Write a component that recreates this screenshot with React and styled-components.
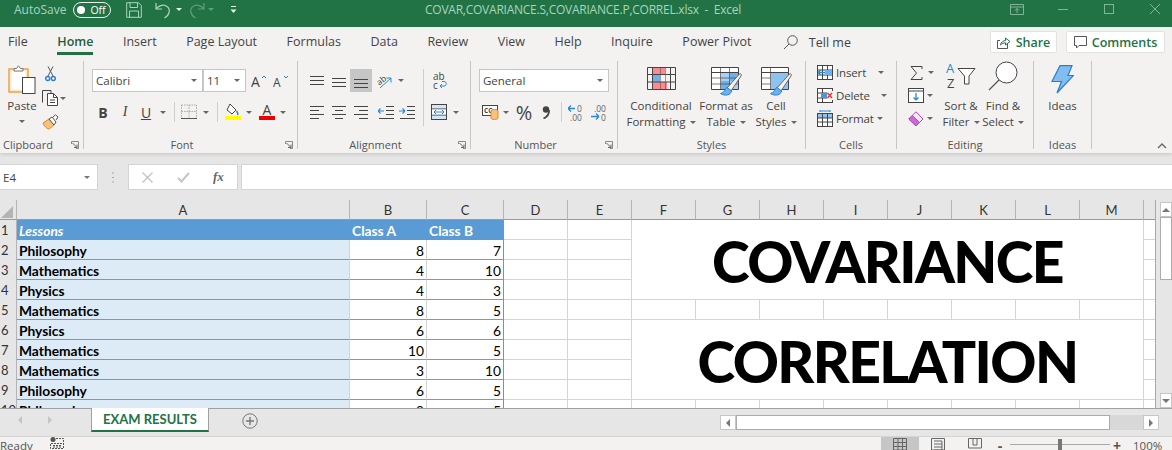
import React from 'react';
import styled, { createGlobalStyle } from 'styled-components';

const UI = '"Open Sans", "Noto Sans", sans-serif';
const CELL = 'Lato, "Open Sans", sans-serif';

const Global = createGlobalStyle`
  html, body { margin: 0; padding: 0; background: #e6e6e6; }
  * { box-sizing: border-box; }
`;

const Page = styled.div`
  width: 1172px;
  height: 450px;
  overflow: hidden;
  display: flex;
  flex-direction: column;
  font-family: ${UI};
  font-size: 11.5px;
  color: #444;
  background: #e6e6e6;
`;

// Title bar
const TitleBar = styled.div`
  height: 27px;
  flex: none;
  background: #217346;
  color: #a9d4bc;
  display: grid;
  grid-template-columns: 425px auto 1fr;
  align-items: center;
  padding-bottom: 8px;
`;

const Quick = styled.div`
  display: flex;
  align-items: center;
  padding-left: 14px;
`;

const AutoSave = styled.span`
  font-size: 12px;
  margin-right: 7px;
`;

const Toggle = styled.div`
  width: 38px;
  height: 16px;
  border: 1.5px solid #e8f3ec;
  border-radius: 8px;
  display: flex;
  align-items: center;
  padding-left: 3px;
  gap: 5px;
  color: #fff;
  font-size: 10.5px;
  margin-right: 15px;
`;

const Knob = styled.span`
  width: 8px;
  height: 8px;
  border-radius: 50%;
  background: #fff;
`;

const QuickSlot = styled.div`
  width: ${p => p.$w}px;
  display: flex;
  justify-content: center;
  align-items: center;
`;

const FileTitle = styled.div`
  font-size: 12px;
  white-space: pre;
  letter-spacing: -0.24px;
`;

const WindowBtns = styled.div`
  display: flex;
  justify-content: flex-end;
  margin-right: -6px;
`;

const WindowBtn = styled.div`
  width: 46px;
  display: flex;
  justify-content: center;
`;

// Tabs
const TabRow = styled.div`
  height: 28px;
  flex: none;
  background: #f3f2f1;
  display: flex;
  padding-left: 8px;
  gap: 29.5px;
`;

const Tab = styled.div`
  height: 28px;
  padding-top: 6px;
  font-size: 12.5px;
  line-height: 18px;
  white-space: nowrap;
  color: ${p => (p.$active ? '#1f5f3c' : '#444')};
  font-weight: ${p => (p.$active ? 600 : 400)};
  border-bottom: 3px solid ${p => (p.$active ? '#217346' : 'transparent')};
`;

const TellMe = styled.div`
  display: flex;
  align-items: center;
  gap: 11px;
  font-size: 12.5px;
  margin-left: 2px;
  height: 28px;
  padding-top: 2px;
`;

const TabActions = styled.div`
  margin-left: auto;
  display: flex;
  gap: 9px;
  padding: 4px 7px 0 0;
`;

const ActionBtn = styled.div`
  width: ${p => p.$w}px;
  height: 22px;
  background: #fff;
  border: 1px solid #e3e2e1;
  border-radius: 2px;
  display: flex;
  align-items: center;
  justify-content: center;
  gap: 5px;
  color: #217346;
  font-size: 12.5px;
  font-weight: 600;
`;

// Ribbon
const Ribbon = styled.div`
  height: 98px;
  flex: none;
  background: #f3f2f1;
  display: flex;
  padding-top: 6px;
  box-shadow: 0 2px 3px rgba(0, 0, 0, 0.1);
  position: relative;
`;

const Group = styled.div`
  width: ${p => p.$w}px;
  height: 88px;
  flex: none;
  border-right: 1px solid #c8c6c4;
  display: flex;
  flex-direction: column;
`;

const GroupBody = styled.div`
  flex: 1;
  min-height: 0;
  display: flex;
  padding: ${p => p.$top || 0}px 0 0 ${p => p.$left || 0}px;
`;

const GroupFooter = styled.div`
  height: 14px;
  margin-bottom: -3px;
  display: grid;
  grid-template-columns: ${p => p.$cols || '1fr auto 1fr'};
  align-items: center;
  line-height: 14px;
  font-size: 11px;
  color: #555;
`;

const GroupLabel = styled.span`
  grid-column: 2;
  padding-right: ${p => p.$shift || 0}px;
`;

const LauncherSlot = styled.span`
  grid-column: 3;
  justify-self: end;
  display: flex;
  padding-right: 4px;
`;

const Stack = styled.div`
  display: flex;
  flex-direction: column;
  gap: ${p => p.$gap || 0}px;
  width: ${p => (p.$w ? `${p.$w}px` : 'auto')};
  flex: none;
`;

const Row = styled.div`
  display: flex;
  align-items: center;
  height: ${p => p.$h || 23}px;
`;

const Btn = styled.div`
  width: ${p => p.$w}px;
  height: ${p => p.$h || 23}px;
  flex: none;
  display: flex;
  align-items: center;
  justify-content: center;
  background: ${p => (p.$on ? '#c6c6c6' : 'transparent')};
  font-family: ${p => (p.$serif ? '"Liberation Serif", serif' : 'inherit')};
`;

const Letter = styled.span`
  font-size: ${p => p.$size || 14}px;
  color: #444;
  font-weight: ${p => (p.$bold ? 700 : 400)};
  font-style: ${p => (p.$italic ? 'italic' : 'normal')};
  text-decoration: ${p => (p.$under ? 'underline' : 'none')};
`;

const VSep = styled.span`
  width: 1px;
  height: ${p => p.$h || 20}px;
  flex: none;
  background: #d0cecc;
  margin: 0 ${p => p.$r || 0}px 0 ${p => p.$l || 0}px;
`;

const Caret = styled.span`
  display: inline-block;
  flex: none;
  width: 0;
  height: 0;
  border-left: 3px solid transparent;
  border-right: 3px solid transparent;
  border-top: 3px solid ${p => p.$c || '#666'};
  vertical-align: middle;
  margin-left: ${p => p.$ml || 0}px;
`;

const Combo = styled.div`
  width: ${p => p.$w}px;
  height: 23px;
  background: #fff;
  border: 1px solid #c6c6c6;
  display: flex;
  align-items: center;
  justify-content: space-between;
  padding: 0 5px 0 3px;
  font-size: 11.5px;
  margin-right: ${p => p.$mr || 0}px;
`;

const BigBtn = styled.div`
  width: ${p => p.$w}px;
  flex: none;
  display: flex;
  flex-direction: column;
  align-items: center;
  white-space: nowrap;
  line-height: 16px;
`;

const BigIcon = styled.div`
  height: ${p => p.$h || 31}px;
  display: flex;
  align-items: flex-start;
  justify-content: center;
`;

const PasteBtn = styled(BigBtn)`
  padding-top: 4px;
  margin-right: 4px;
`;

const CellAction = styled(Row)`
  gap: 3px;
`;

const CellLabel = styled.span`
  font-size: 11.5px;
  letter-spacing: -0.15px;
  min-width: ${p => p.$w}px;
`;

const FormulaBar = styled.div`
  margin-top: 11px;
  height: 26px;
  flex: none;
  display: flex;
  align-items: stretch;
`;

const NameBox = styled.div`
  width: 98px;
  background: #fff;
  border: 1px solid #d4d4d4;
  border-left: 0;
  display: flex;
  align-items: center;
  justify-content: space-between;
  padding: 0 7px 0 3px;
  font-size: 11.5px;
`;

const Grip = styled.div`
  width: 30px;
  display: flex;
  justify-content: center;
  align-items: center;
`;

const FxBox = styled.div`
  width: 110px;
  background: #fff;
  border: 1px solid #d4d4d4;
  display: grid;
  grid-template-columns: 36px 36px 36px;
  align-items: center;
  justify-items: center;
  margin-right: 3px;
`;

const FormulaInput = styled.div`
  flex: 1;
  background: #fff;
  border: 1px solid #d4d4d4;
  border-right: 0;
`;

// Sheet
const SheetArea = styled.div`
  margin-top: 10px;
  height: 208px;
  flex: none;
  display: flex;
  justify-content: space-between;
  overflow: hidden;
`;

const Sheet = styled.div`
  width: 1156px;
  height: 208px;
  overflow: hidden;
  display: grid;
  grid-template-columns: 17px 333px 77px 77px 64px 64px repeat(8, 64px) 12px;
  grid-auto-rows: 20px;
  font-family: ${CELL};
  font-size: 13.8px;
  color: #000;
  background: #fff;
  border-right: 1px solid #a8a8a8;
`;

const Corner = styled.div`
  background: #e6e6e6;
  border-right: 1px solid #b4b4b4;
  border-bottom: 1px solid #9a9a9a;
  display: flex;
  align-items: flex-end;
  justify-content: flex-end;
  padding: 0 3px 1px 0;
`;

const ColHead = styled.div`
  background: #e6e6e6;
  border-right: 1px solid #b4b4b4;
  border-bottom: 1px solid #9a9a9a;
  display: flex;
  align-items: center;
  justify-content: center;
  font-size: 13px;
  color: #333;
`;

const RowHead = styled.div`
  background: #e6e6e6;
  border-right: 1px solid #b4b4b4;
  padding-left: 1px;
  font-size: 13px;
  line-height: 20px;
  color: #333;
  white-space: nowrap;
  overflow: hidden;
`;

const Cell = styled.div`
  line-height: 19px;
  padding: 1px 2px 0;
  white-space: nowrap;
  overflow: hidden;
  border-right: 1px solid ${p => (p.$edge ? '#5b9bd5' : '#d4d4d4')};
  border-bottom: 1px solid ${p => (p.$table ? '#6a9fcb' : '#d4d4d4')};
  text-align: ${p => (p.$num ? 'right' : 'left')};
  font-weight: ${p => (p.$bold ? 700 : 400)};
  background: ${p => p.$bg || '#fff'};
`;

const HeadCell = styled(Cell)`
  background: #5b9bd5;
  color: #fff;
  font-weight: 700;
  font-style: ${p => (p.$italic ? 'italic' : 'normal')};
  border-right: 0;
  border-bottom: 0;
`;

const Banner = styled.div`
  grid-column: span 8;
  grid-row: span 4;
  display: flex;
  align-items: center;
  justify-content: center;
  padding-top: 2px;
  font-size: 57px;
  font-weight: 900;
  letter-spacing: -1.6px;
  color: #000;
  background: #fff;
  border-right: 1px solid #d4d4d4;
  border-bottom: 1px solid #d4d4d4;
`;

const VScroll = styled.div`
  width: 12px;
  height: 208px;
  display: flex;
  flex-direction: column;
  background: #e6e6e6;
`;

const ScrollBtn = styled.div`
  flex: none;
  width: ${p => p.$w || 12}px;
  height: ${p => p.$h || 15}px;
  margin-top: ${p => p.$mt || 0}px;
  background: #fff;
  border: 1px solid #c6c6c6;
  display: flex;
  align-items: center;
  justify-content: center;
`;

const VThumb = styled.div`
  width: 12px;
  height: 63px;
  background: #fff;
  border: 1px solid #ababab;
`;

const Spacer = styled.div`
  flex: 1;
`;

const UpTri = styled.span`
  width: 0;
  height: 0;
  border-left: 4px solid transparent;
  border-right: 4px solid transparent;
  border-bottom: 4px solid #777;
`;

const DownTri = styled.span`
  width: 0;
  height: 0;
  border-left: 4px solid transparent;
  border-right: 4px solid transparent;
  border-top: 4px solid #777;
`;

const SideTri = styled.span`
  width: 0;
  height: 0;
  border-top: 4px solid transparent;
  border-bottom: 4px solid transparent;
  ${p => (p.$left ? 'border-right' : 'border-left')}: 4px solid ${p => p.$c || '#777'};
`;

// Sheet tabs
const SheetTabs = styled.div`
  height: 28px;
  flex: none;
  background: #e6e6e6;
  border-top: 1px solid #a0a0a0;
  display: flex;
  align-items: flex-start;
`;

const TabNav = styled.div`
  width: 91px;
  height: 22px;
  display: flex;
  align-items: center;
  padding-left: 18px;
  gap: 26px;
`;

const SheetTab = styled.div`
  width: 118px;
  height: 24px;
  margin-top: -1px;
  background: #fff;
  border: 1px solid #a0a0a0;
  border-top: 0;
  border-bottom: 2px solid #217346;
  display: flex;
  align-items: center;
  justify-content: center;
  color: #217346;
  font-family: ${CELL};
  font-weight: 700;
  font-size: 13px;
`;

const AddSheet = styled.div`
  margin: 4px 0 0 33px;
  display: flex;
`;

const HScroll = styled.div`
  margin: 6px 13px 0 auto;
  width: 439px;
  height: 15px;
  display: flex;
  background: #d8d8d8;
`;

const HThumb = styled.div`
  width: 374px;
  background: #fff;
  border: 1px solid #ababab;
`;

// Status bar
const StatusBar = styled.div`
  height: 14px;
  flex: none;
  background: #f3f2f1;
  border-top: 1px solid #d4d4d4;
  display: flex;
  overflow: hidden;
  font-size: 11.5px;
  line-height: 16px;
  color: #555;
`;

const StatusText = styled.span`
  padding-top: 1px;
  margin-right: 17px;
`;

const ViewBtns = styled.div`
  margin-left: auto;
  display: flex;
  align-items: flex-start;
`;

const ViewBtn = styled.div`
  width: ${p => p.$w}px;
  height: 14px;
  display: flex;
  justify-content: center;
  padding-top: 1px;
  background: ${p => (p.$on ? '#c6c6c6' : 'transparent')};
`;

const Zoom = styled.div`
  display: flex;
  align-items: flex-start;
  width: 179px;
  padding-left: 1px;
`;

const ZoomSign = styled.span`
  width: 12px;
  text-align: center;
  font-size: 14px;
  font-weight: 700;
  color: #555;
  line-height: 18px;
`;

const ZoomTrack = styled.div`
  width: 100px;
  height: 8px;
  margin: 0 1px 0 4px;
  border-bottom: 1px solid #a8a8a8;
  display: flex;
  justify-content: center;
`;

const ZoomThumb = styled.span`
  width: 4px;
  height: 14px;
  margin-top: 2px;
  background: #777;
`;

const ZoomPct = styled.span`
  margin-left: 10px;
  padding-top: 1px;
  white-space: nowrap;
`;

// Icons
const Ico = ({ w, h, children }) => (
  <svg width={w} height={h} viewBox={`0 0 ${w} ${h}`} fill="none" style={{ display: 'block', flex: 'none' }}>
    {children}
  </svg>
);

const Launcher = () => (
  <Ico w={8} h={8}>
    <path d="M.5 3V.5H7.5V7.5H5" stroke="#888" />
    <path d="M1.5 2L6 6.5M6 3.5V6.5H3" stroke="#666" />
  </Ico>
);

const Lines = ({ rows }) => (
  <Ico w={14} h={14}>
    {rows.map(([x1, x2, y]) => (
      <path key={y} d={`M${x1} ${y}.5H${x2}`} stroke="#444" />
    ))}
  </Ico>
);

const PasteIcon = () => (
  <Ico w={28} h={30}>
    <rect x="1" y="4" width="19" height="23" fill="#fbe9cd" stroke="#e5a74c" strokeWidth="1.5" />
    <rect x="3.5" y="6.5" width="14" height="18" fill="#fff" />
    <path d="M6 6V3.5H8.5L10.5 .8L12.5 3.5H15V6Z" fill="#fff" stroke="#777" />
    <rect x="14.5" y="12.5" width="12.5" height="16" fill="#fff" stroke="#444" />
  </Ico>
);

const ScissorsIcon = () => (
  <Ico w={11} h={16}>
    <path d="M3 10L8 .5M8 10L3 .5" stroke="#555" />
    <circle cx="2.7" cy="12.5" r="2" stroke="#2b7cd3" strokeWidth="1.4" />
    <circle cx="8.3" cy="12.5" r="2" stroke="#2b7cd3" strokeWidth="1.4" />
  </Ico>
);

const CopyIcon = () => (
  <Ico w={17} h={16}>
    <path d="M.5 12.5V.5H9V3" stroke="#444" />
    <path d="M5.5 3.5H11.5L15.5 7.5V15.5H5.5Z" fill="#fff" stroke="#444" />
    <path d="M11.5 3.5V7.5H15.5M8 10H13M8 12.5H13" stroke="#444" />
  </Ico>
);

const BrushIcon = () => (
  <Ico w={17} h={16}>
    <path d="M1 9L7 5L12 11L7 15C5 15 2 12 1 9Z" fill="#f8c27c" stroke="#e08a22" />
    <path d="M7 5L12 11L14 8L10 3Z" fill="#fff" stroke="#555" />
    <path d="M11 3L13.5 .8L16 3L14 6" fill="#fff" stroke="#555" />
  </Ico>
);

const BordersIcon = () => (
  <Ico w={16} h={16}>
    <path d="M.5 1H15.5M.5 7.5H15.5M.5 1V14M15.5 1V14M8 1V14" stroke="#aaa" strokeDasharray="1.5 1" />
    <path d="M0 14.5H16" stroke="#555" />
  </Ico>
);

const FillIcon = () => (
  <Ico w={16} h={18}>
    <path d="M5 1L11 7L7 11L2 7Z" fill="#fff" stroke="#444" />
    <path d="M11.5 8C13 10 13.5 11 12.5 12" stroke="#2b7cd3" strokeWidth="1.4" />
    <rect y="13" width="16" height="4" fill="#ffff00" />
  </Ico>
);

const FontColorIcon = () => (
  <Ico w={16} h={18}>
    <text x="8" y="12" textAnchor="middle" fontFamily={UI} fontSize="14" fill="#444">A</text>
    <rect y="13" width="16" height="4" fill="#f00000" />
  </Ico>
);

const GrowIcon = ({ down }) => (
  <Ico w={17} h={16}>
    <text x="0" y="14" fontFamily={UI} fontSize={down ? 12 : 14} fill="#444">A</text>
    <path d={down ? 'M11 3L13 5L15 3' : 'M11 5L13 3L15 5'} stroke="#2b7cd3" />
  </Ico>
);

const OrientIcon = () => (
  <Ico w={16} h={16}>
    <text x="0" y="10" fontFamily={UI} fontSize="8.5" fill="#444" transform="rotate(-38 5 8)">ab</text>
    <path d="M3 15L14 5M14 5H9.5M14 5V9.5" stroke="#2b88d8" />
  </Ico>
);

const WrapIcon = () => (
  <Ico w={15} h={18}>
    <text x="0" y="8" fontFamily={UI} fontSize="10" fill="#444">ab</text>
    <text x="0" y="17" fontFamily={UI} fontSize="10" fill="#444">c</text>
    <path d="M7 14H11C14 14 14 9.5 11 9.5H9M7 14L9 12M7 14L9 16" stroke="#2b88d8" />
  </Ico>
);

const IndentIcon = ({ more }) => (
  <Ico w={16} h={14}>
    <path d="M8 1.5H16M8 5.5H16M8 9.5H16M1 13.5H16" stroke="#444" />
    <path d={more ? 'M0 6H6M6 6L3.5 3.5M6 6L3.5 8.5' : 'M0 6H6M0 6L2.5 3.5M0 6L2.5 8.5'} stroke="#2b88d8" strokeWidth="1.2" />
  </Ico>
);

const MergeIcon = () => (
  <Ico w={16} h={16}>
    <rect x=".5" y=".5" width="15" height="15" fill="#d3e6f8" stroke="#444" />
    <path d="M.5 5H15.5M.5 11H15.5" stroke="#444" />
    <rect x="1" y="5.5" width="14" height="5" fill="#fff" />
    <path d="M3 8H13M3 8L5 6M3 8L5 10M13 8L11 6M13 8L11 10" stroke="#2b88d8" />
  </Ico>
);

const AccountingIcon = () => (
  <Ico w={17} h={16}>
    <rect x=".5" y="1.5" width="15" height="10" fill="#fff" stroke="#444" />
    <text x="2" y="9" fontFamily={UI} fontSize="6.5" fontWeight="700" fill="#444">CC</text>
    <ellipse cx="12.5" cy="7" rx="3.5" ry="1.5" fill="#f8c27c" stroke="#e08a22" />
    <path d="M9 7V14C9 16 16 16 16 14V7" fill="#f8c27c" stroke="#e08a22" />
  </Ico>
);

const CommaIcon = () => (
  <Ico w={8} h={13}>
    <circle cx="4" cy="3.5" r="3.2" fill="#444" />
    <path d="M7 4C7.3 8 5 11 1.5 12.5" stroke="#444" strokeWidth="1.8" />
  </Ico>
);

const DecimalUpIcon = () => (
  <Ico w={16} h={17}>
    <path d="M0 4.5H7M0 4.5L3 1.5M0 4.5L3 7.5" stroke="#2b88d8" strokeWidth="1.3" />
    <text x="9" y="8" fontFamily={UI} fontSize="8.5" fill="#666">0</text>
    <text x="2" y="16.5" fontFamily={UI} fontSize="8.5" fill="#666">.00</text>
  </Ico>
);

const DecimalDownIcon = () => (
  <Ico w={16} h={17}>
    <text x="3" y="8" fontFamily={UI} fontSize="8.5" fill="#666">.00</text>
    <path d="M0 12.5H8M8 12.5L5 9.5M8 12.5L5 15.5" stroke="#2b88d8" strokeWidth="1.3" />
    <text x="10" y="16.5" fontFamily={UI} fontSize="8.5" fill="#666">0</text>
  </Ico>
);

const CondIcon = () => (
  <Ico w={29} h={23}>
    <path d="M5 1H18V8H5ZM5 15H20V22H5Z" fill="#f98a8f" />
    <rect x="5" y="8" width="8" height="7" fill="#6fb1ec" />
    <path d="M.5 .5H28.5V22.5H.5ZM5.5 .5V22.5M23.5 .5V22.5M.5 7.5H28.5M.5 15H28.5" stroke="#444" />
    <path d="M13.5 .5V22.5M18.5 .5V22.5" stroke="#444" strokeOpacity=".5" />
  </Ico>
);

const TableIcon = ({ plain }) => (
  <Ico w={31} h={30}>
    <rect x="1" y="1" width="27" height="21" fill="#fff" />
    <path d="M10 6H28V22H10Z" fill={plain ? '#8ec2f1' : '#a8cff5'} />
    {!plain && <path d="M19 6H28V14H19ZM10 14H19V22H10Z" fill="#6fb1ec" />}
    <path d="M.5 .5H27.5V22.5H.5ZM.5 5.5H27.5" stroke="#444" />
    <path d={plain ? 'M.5 11H9.5M.5 17H9.5M9.5 .5V22.5' : 'M.5 11H27.5M.5 17H27.5M9.5 .5V22.5M18.5 .5V22.5'} stroke="#444" strokeOpacity=".7" />
    <path d="M16 21L28 7.5C29.5 6 31 7 30 9L20 24Z" fill="#f3f2f1" stroke="#666" />
    <path d="M16 20.5C13 21.5 15 25 9.5 26.5C14 29.5 20 28 20.5 24Z" fill="#6fb1ec" stroke="#2b7cd3" />
  </Ico>
);

const InsertCellsIcon = () => (
  <Ico w={16} h={15}>
    <rect x=".5" y=".5" width="15" height="14" fill="#fff" stroke="#444" />
    <path d="M.5 5H15.5M.5 10H15.5M5.5 .5V14.5M10.5 .5V14.5" stroke="#444" />
    <rect x="8" y="5" width="7" height="5" fill="#6fb1ec" />
    <path d="M1 7.5H8M1 7.5L3.5 5M1 7.5L3.5 10" stroke="#2b88d8" strokeWidth="1.3" />
  </Ico>
);

const DeleteCellsIcon = () => (
  <Ico w={16} h={15}>
    <rect x=".5" y=".5" width="15" height="14" fill="#fff" stroke="#444" />
    <path d="M.5 5H15.5M.5 10H15.5M5.5 .5V14.5" stroke="#444" />
    <rect x="4" y="5" width="6" height="5" fill="#4a96dd" />
    <rect x="10" y="3" width="6" height="9" fill="#f3f2f1" />
    <path d="M10.5 5L15 10M15 5L10.5 10" stroke="#e23a3a" strokeWidth="1.5" />
  </Ico>
);

const FormatCellsIcon = () => (
  <Ico w={16} h={17}>
    <rect x=".5" y="3.5" width="15" height="13" fill="#fff" stroke="#444" />
    <rect x="1" y="4" width="14" height="4" fill="#8ec2f1" />
    <path d="M.5 8H15.5M.5 12H15.5M5.5 3.5V16.5M10.5 3.5V16.5" stroke="#444" />
    <path d="M3 1H13M3 0V2M13 0V2" stroke="#2b88d8" />
  </Ico>
);

const SigmaIcon = () => (
  <Ico w={13} h={14}>
    <path d="M12 3V.5H1L6.5 7L1 13.5H12V11" stroke="#444" />
  </Ico>
);

const FillDownIcon = () => (
  <Ico w={16} h={15}>
    <rect x=".5" y=".5" width="15" height="14" fill="#fff" stroke="#444" />
    <path d="M.5 3H15.5" stroke="#444" />
    <path d="M8 5V12M8 12L5.5 9.5M8 12L10.5 9.5" stroke="#2b88d8" strokeWidth="1.3" />
  </Ico>
);

const EraserIcon = () => (
  <Ico w={16} h={16}>
    <path d="M.8 8L8 .8L15 8L8 15Z" fill="#f5e7f7" stroke="#b146c2" />
    <path d="M.8 8L4.4 4.4L11.5 11.5L8 15Z" fill="#c66dd4" stroke="#b146c2" />
  </Ico>
);

const SortIcon = () => (
  <Ico w={30} h={28}>
    <text x="0" y="12" fontFamily={UI} fontSize="13" fill="#2b88d8">A</text>
    <text x="1" y="27" fontFamily={UI} fontSize="13" fill="#444">Z</text>
    <path d="M12 7.5H29L23 15V23H18.5V15Z" fill="#fff" stroke="#444" />
  </Ico>
);

const FindIcon = () => (
  <Ico w={30} h={30}>
    <circle cx="18.5" cy="11.5" r="10.5" fill="#fff" stroke="#444" />
    <path d="M11 19L1 29" stroke="#555" strokeWidth="1.3" />
  </Ico>
);

const BoltIcon = () => (
  <Ico w={23} h={29}>
    <path d="M9 .7H21L17 10.5H22.5L6 28L10.5 16.5H1Z" fill="#82bdf0" stroke="#2b7cd3" strokeWidth="1.2" />
  </Ico>
);

const SaveIcon = () => (
  <Ico w={16} h={16}>
    <path d="M.7 .7H12.5L15.3 3.5V15.3H.7Z" stroke="#a9d4bc" />
    <path d="M4 .7V5.5H11.5V.7M3.5 15.3V9H12.5V15.3" stroke="#a9d4bc" />
  </Ico>
);

const UndoIcon = ({ redo, color }) => (
  <Ico w={18} h={18}>
    <g transform={redo ? 'matrix(-1 0 0 1 18 0)' : undefined}>
      <path d="M1 2V8H7M1 8C4 4 9 3 12 5.5C16 8.5 14.5 14 9.5 17" stroke={color} strokeWidth="1.2" />
    </g>
  </Ico>
);

const CustomizeIcon = () => (
  <Ico w={7} h={8}>
    <path d="M1 .5H6" stroke="#e8f3ec" />
    <path d="M0.5 3.5H6.5L3.5 7Z" fill="#e8f3ec" />
  </Ico>
);

const RibbonDisplayIcon = () => (
  <Ico w={14} h={11}>
    <path d="M.5 .5H13.5V10.5H.5ZM.5 3H13.5M7 9V4.5M5 6.5L7 4.5L9 6.5" stroke="#7fb696" />
  </Ico>
);

const MinIcon = () => (
  <Ico w={10} h={10}>
    <path d="M0 5.5H10" stroke="#7fb696" />
  </Ico>
);

const MaxIcon = () => (
  <Ico w={10} h={10}>
    <rect x=".5" y=".5" width="9" height="9" stroke="#7fb696" />
  </Ico>
);

const CloseIcon = () => (
  <Ico w={10} h={10}>
    <path d="M0 0L10 10M10 0L0 10" stroke="#7fb696" />
  </Ico>
);

const SearchIcon = () => (
  <Ico w={15} h={15}>
    <circle cx="9.5" cy="5.5" r="4.8" stroke="#555" />
    <path d="M6 9L1 14" stroke="#555" />
  </Ico>
);

const ShareIcon = () => (
  <Ico w={14} h={13}>
    <path d="M3 4.5H.5V12.5H10.5V8" stroke="#555" />
    <path d="M3.5 9C4 6 6.5 4.5 8.5 4.5V2L13 5.5L8.5 9V6.8C6.5 6.8 5 7.5 3.5 9Z" stroke="#217346" />
  </Ico>
);

const CommentIcon = () => (
  <Ico w={13} h={13}>
    <path d="M.5 .5H12.5V9.5H5L2.5 12V9.5H.5Z" stroke="#555" />
  </Ico>
);

const CrossIcon = () => (
  <Ico w={11} h={11}>
    <path d="M.5 .5L10.5 10.5M10.5 .5L.5 10.5" stroke="#c4c4c4" strokeWidth="1.4" />
  </Ico>
);

const CheckIcon = () => (
  <Ico w={13} h={11}>
    <path d="M1 6L4.5 9.5L12 1" stroke="#c4c4c4" strokeWidth="2" />
  </Ico>
);

const FxIcon = () => (
  <Ico w={13} h={13}>
    <text x="0" y="10" fontFamily='"Liberation Serif", serif' fontStyle="italic" fontWeight="700" fontSize="13" fill="#666">fx</text>
  </Ico>
);

const GripIcon = () => (
  <Ico w={3} h={11}>
    <path d="M0 1H3M0 5.5H3M0 10H3" stroke="#aaa" strokeDasharray="2 1" />
  </Ico>
);

const CornerTriangle = () => (
  <Ico w={12} h={12}>
    <path d="M12 0V12H0Z" fill="#b4b4b4" />
  </Ico>
);

const PlusCircle = () => (
  <Ico w={16} h={16}>
    <circle cx="8" cy="8" r="7.2" stroke="#777" />
    <path d="M4 8H12M8 4V12" stroke="#777" strokeWidth="1.4" />
  </Ico>
);

const MacroIcon = () => (
  <Ico w={14} h={12}>
    <circle cx="3" cy="2.5" r="2.5" fill="#555" />
    <path d="M6 1.5H13.5V11.5H.5V6.5H13.5M3 8.5H11M3 10H11" stroke="#555" strokeDasharray="2 1" />
  </Ico>
);

const NormalViewIcon = () => (
  <Ico w={14} h={12}>
    <path d="M.5 .5H13.5V12H.5ZM.5 4.5H13.5M.5 8.5H13.5M5 .5V12M9.5 .5V12" stroke="#666" />
  </Ico>
);

const LayoutViewIcon = () => (
  <Ico w={14} h={12}>
    <path d="M.5 .5H13.5V12H.5ZM3 3H11V12H3M3 6H11M3 9H11" stroke="#666" />
  </Ico>
);

const BreakViewIcon = () => (
  <Ico w={14} h={12}>
    <path d="M.5 .5H13.5V10H.5ZM5 .5V7H9V.5" stroke="#666" />
  </Ico>
);

const CollapseIcon = () => (
  <Ico w={10} h={6}>
    <path d="M1 5L5 1L9 5" stroke="#666" strokeWidth="1.4" />
  </Ico>
);

const CollapseSlot = styled.div`
  margin-left: auto;
  align-self: flex-end;
  padding: 0 5px 4px 0;
`;

const LABELS = ['A', 'B', 'C', 'D', 'E', 'F', 'G', 'H', 'I', 'J', 'K', 'L', 'M'];
const TABS = ['File', 'Home', 'Insert', 'Page Layout', 'Formulas', 'Data', 'Review', 'View', 'Help', 'Inquire', 'Power Pivot'];

const DATA = [
  ['Philosophy', 8, 7],
  ['Mathematics', 4, 10],
  ['Physics', 4, 3],
  ['Mathematics', 8, 5],
  ['Physics', 6, 6],
  ['Mathematics', 10, 5],
  ['Mathematics', 3, 10],
  ['Philosophy', 6, 5],
  ['Philosophy', 9, 5],
];

const blanks = (from, n) =>
  Array.from({ length: n }, (_, i) => <Cell key={`${from}-${i}`} />);

const SheetRow = ({ index, row }) => {
  const num = index + 2;
  return (
    <>
      <RowHead>{num}</RowHead>
      <Cell $table $bold $bg="#ddebf7">{row[0]}</Cell>
      <Cell $table $num>{row[1]}</Cell>
      <Cell $table $num $edge>{row[2]}</Cell>
      {blanks('de', 2)}
      {num === 6 && <Banner>CORRELATION</Banner>}
      {num === 5 || num === 10 ? blanks('fm', 8) : null}
      <Cell />
    </>
  );
};

const App = () => (
  <Page>
    <Global />
    <TitleBar>
      <Quick>
        <AutoSave>AutoSave</AutoSave>
        <Toggle><Knob />Off</Toggle>
        <QuickSlot $w={16}><SaveIcon /></QuickSlot>
        <QuickSlot $w={13} />
        <QuickSlot $w={18}><UndoIcon color="#a9d4bc" /></QuickSlot>
        <QuickSlot $w={11}><Caret $c="#e8f3ec" /></QuickSlot>
        <QuickSlot $w={3} />
        <QuickSlot $w={18}><UndoIcon redo color="#5f9d7b" /></QuickSlot>
        <QuickSlot $w={11}><Caret $c="#5f9d7b" /></QuickSlot>
        <QuickSlot $w={14} />
        <QuickSlot $w={7}><CustomizeIcon /></QuickSlot>
      </Quick>
      <FileTitle>COVAR,COVARIANCE.S,COVARIANCE.P,CORREL.xlsx  -  Excel</FileTitle>
      <WindowBtns>
        <WindowBtn><RibbonDisplayIcon /></WindowBtn>
        <WindowBtn><MinIcon /></WindowBtn>
        <WindowBtn><MaxIcon /></WindowBtn>
        <WindowBtn><CloseIcon /></WindowBtn>
      </WindowBtns>
    </TitleBar>

    <TabRow>
      {TABS.map(t => (
        <Tab key={t} $active={t === 'Home'}>{t}</Tab>
      ))}
      <TellMe><SearchIcon />Tell me</TellMe>
      <TabActions>
        <ActionBtn $w={67}><ShareIcon />Share</ActionBtn>
        <ActionBtn $w={99}><CommentIcon />Comments</ActionBtn>
      </TabActions>
    </TabRow>

    <Ribbon>
      <Group $w={84}>
        <GroupBody $left={8}>
          <PasteBtn $w={28}>
            <BigIcon $h={33}><PasteIcon /></BigIcon>
            Paste
            <Row $h={14}><Caret /></Row>
          </PasteBtn>
          <Stack $gap={0}>
            <Row $h={25}><Btn $w={20} $h={25}><ScissorsIcon /></Btn></Row>
            <Row $h={24}><Btn $w={20} $h={24}><CopyIcon /></Btn><Caret /></Row>
            <Row $h={24}><Btn $w={20} $h={24}><BrushIcon /></Btn></Row>
          </Stack>
        </GroupBody>
        <GroupFooter $cols="3px 54px 1fr">
          <GroupLabel>Clipboard</GroupLabel>
          <LauncherSlot><Launcher /></LauncherSlot>
        </GroupFooter>
      </Group>

      <Group $w={214}>
        <GroupBody $left={8} $top={8}>
          <Stack $gap={9}>
            <Row>
              <Combo $w={111}>Calibri<Caret /></Combo>
              <Combo $w={43} $mr={5}>11<Caret /></Combo>
              <Btn $w={17}><GrowIcon /></Btn>
              <Btn $w={5} />
              <Btn $w={17}><GrowIcon down /></Btn>
            </Row>
            <Row $h={22}>
              <Btn $w={22} $h={22}><Letter $bold>B</Letter></Btn>
              <Btn $w={22} $h={22} $serif><Letter $italic>I</Letter></Btn>
              <Btn $w={20} $h={22}><Letter $under>U</Letter></Btn>
              <Btn $w={14} $h={22}><Caret /></Btn>
              <VSep $l={4} $r={5} />
              <Btn $w={18} $h={22}><BordersIcon /></Btn>
              <Btn $w={16} $h={22}><Caret /></Btn>
              <VSep $l={3} $r={6} />
              <Btn $w={18} $h={22}><FillIcon /></Btn>
              <Btn $w={14} $h={22}><Caret /></Btn>
              <Btn $w={2} $h={22} />
              <Btn $w={18} $h={22}><FontColorIcon /></Btn>
              <Btn $w={14} $h={22}><Caret /></Btn>
            </Row>
          </Stack>
        </GroupBody>
        <GroupFooter>
          <GroupLabel $shift={17}>Font</GroupLabel>
          <LauncherSlot><Launcher /></LauncherSlot>
        </GroupFooter>
      </Group>

      <Group $w={173}>
        <GroupBody $left={8} $top={8}>
          <Stack $gap={9} $w={117}>
            <Row>
              <Btn $w={22}><Lines rows={[[0, 14, 2], [0, 14, 6], [0, 14, 10]]} /></Btn>
              <Btn $w={22}><Lines rows={[[0, 14, 4], [0, 14, 8], [0, 14, 12]]} /></Btn>
              <Btn $w={22} $on><Lines rows={[[0, 14, 5], [0, 14, 9], [0, 14, 13]]} /></Btn>
              <Btn $w={26}><OrientIcon /></Btn>
              <Caret />
            </Row>
            <Row $h={22}>
              <Btn $w={22} $h={22}><Lines rows={[[0, 14, 1], [0, 9, 5], [0, 14, 9], [0, 9, 13]]} /></Btn>
              <Btn $w={22} $h={22}><Lines rows={[[0, 14, 1], [3, 11, 5], [0, 14, 9], [3, 11, 13]]} /></Btn>
              <Btn $w={22} $h={22}><Lines rows={[[0, 14, 1], [5, 14, 5], [0, 14, 9], [5, 14, 13]]} /></Btn>
              <Btn $w={3} $h={22} />
              <Btn $w={22} $h={22}><IndentIcon /></Btn>
              <Btn $w={20} $h={22}><IndentIcon more /></Btn>
            </Row>
          </Stack>
          <VSep $h={57} />
          <Stack $gap={9}>
            <Row><Btn $w={32}><WrapIcon /></Btn></Row>
            <Row $h={22}>
              <Btn $w={5} $h={22} />
              <Btn $w={19} $h={22}><MergeIcon /></Btn>
              <Btn $w={16} $h={22}><Caret /></Btn>
            </Row>
          </Stack>
        </GroupBody>
        <GroupFooter>
          <GroupLabel $shift={17}>Alignment</GroupLabel>
          <LauncherSlot><Launcher /></LauncherSlot>
        </GroupFooter>
      </Group>

      <Group $w={147}>
        <GroupBody $left={8} $top={8}>
          <Stack $gap={9}>
            <Row><Combo $w={130}>General<Caret /></Combo></Row>
            <Row $h={22}>
              <Btn $w={22} $h={22}><AccountingIcon /></Btn>
              <Btn $w={10} $h={22}><Caret /></Btn>
              <Btn $w={26} $h={22}><Letter $size={20}>%</Letter></Btn>
              <Btn $w={18} $h={22}><CommaIcon /></Btn>
              <VSep $l={6} $r={3} />
              <Btn $w={22} $h={22}><DecimalUpIcon /></Btn>
              <Btn $w={24} $h={22}><DecimalDownIcon /></Btn>
            </Row>
          </Stack>
        </GroupBody>
        <GroupFooter>
          <GroupLabel $shift={17}>Number</GroupLabel>
          <LauncherSlot><Launcher /></LauncherSlot>
        </GroupFooter>
      </Group>

      <Group $w={188}>
        <GroupBody $left={8} $top={6}>
          <BigBtn $w={70}>
            <BigIcon><CondIcon /></BigIcon>
            <span>Conditional</span>
            <span>Formatting<Caret $ml={4} /></span>
          </BigBtn>
          <BigBtn $w={60}>
            <BigIcon><TableIcon /></BigIcon>
            <span>Format as</span>
            <span>Table<Caret $ml={4} /></span>
          </BigBtn>
          <BigBtn $w={40}>
            <BigIcon><TableIcon plain /></BigIcon>
            <span>Cell</span>
            <span>Styles<Caret $ml={4} /></span>
          </BigBtn>
        </GroupBody>
        <GroupFooter>
          <GroupLabel>Styles</GroupLabel>
        </GroupFooter>
      </Group>

      <Group $w={91}>
        <GroupBody $left={11}>
          <Stack>
            <CellAction><InsertCellsIcon /><CellLabel $w={39}>Insert</CellLabel><Caret /></CellAction>
            <CellAction><DeleteCellsIcon /><CellLabel $w={42}>Delete</CellLabel><Caret /></CellAction>
            <CellAction><FormatCellsIcon /><CellLabel>Format</CellLabel><Caret /></CellAction>
          </Stack>
        </GroupBody>
        <GroupFooter>
          <GroupLabel>Cells</GroupLabel>
        </GroupFooter>
      </Group>

      <Group $w={137}>
        <GroupBody $left={10}>
          <Stack $w={33}>
            <Row><Btn $w={18}><SigmaIcon /></Btn><Btn $w={12}><Caret /></Btn></Row>
            <Row><Btn $w={18}><FillDownIcon /></Btn><Btn $w={10}><Caret /></Btn></Row>
            <Row><Btn $w={18}><EraserIcon /></Btn><Btn $w={10}><Caret /></Btn></Row>
          </Stack>
          <BigBtn $w={42}>
            <BigIcon $h={37}><SortIcon /></BigIcon>
            <span>Sort &amp;</span>
            <span>Filter<Caret $ml={4} /></span>
          </BigBtn>
          <BigBtn $w={42}>
            <BigIcon $h={37}><FindIcon /></BigIcon>
            <span>Find &amp;</span>
            <span>Select<Caret $ml={4} /></span>
          </BigBtn>
        </GroupBody>
        <GroupFooter>
          <GroupLabel>Editing</GroupLabel>
        </GroupFooter>
      </Group>

      <Group $w={58}>
        <GroupBody $top={4}>
          <BigBtn $w={57}>
            <BigIcon $h={33}><BoltIcon /></BigIcon>
            Ideas
          </BigBtn>
        </GroupBody>
        <GroupFooter>
          <GroupLabel>Ideas</GroupLabel>
        </GroupFooter>
      </Group>

      <CollapseSlot><CollapseIcon /></CollapseSlot>
    </Ribbon>

    <FormulaBar>
      <NameBox>E4<Caret $c="#777" /></NameBox>
      <Grip><GripIcon /></Grip>
      <FxBox><CrossIcon /><CheckIcon /><FxIcon /></FxBox>
      <FormulaInput />
    </FormulaBar>

    <SheetArea>
      <Sheet>
        <Corner><CornerTriangle /></Corner>
        {LABELS.map(l => <ColHead key={l}>{l}</ColHead>)}
        <ColHead />

        <RowHead>1</RowHead>
        <HeadCell $italic>Lessons</HeadCell>
        <HeadCell>Class A</HeadCell>
        <HeadCell>Class B</HeadCell>
        {blanks('r1', 2)}
        <Banner>COVARIANCE</Banner>
        <Cell />

        {DATA.map((row, i) => <SheetRow key={i} index={i} row={row} />)}
      </Sheet>
      <VScroll>
        <ScrollBtn $mt={2}><UpTri /></ScrollBtn>
        <VThumb />
        <Spacer />
        <ScrollBtn><DownTri /></ScrollBtn>
      </VScroll>
    </SheetArea>

    <SheetTabs>
      <TabNav><SideTri $left $c="#c4c4c4" /><SideTri $c="#c4c4c4" /></TabNav>
      <SheetTab>EXAM RESULTS</SheetTab>
      <AddSheet><PlusCircle /></AddSheet>
      <HScroll>
        <ScrollBtn $w={16} $h={15}><SideTri $left /></ScrollBtn>
        <HThumb />
        <Spacer />
        <ScrollBtn $w={16} $h={15}><SideTri /></ScrollBtn>
      </HScroll>
    </SheetTabs>

    <StatusBar>
      <StatusText>Ready</StatusText>
      <MacroIcon />
      <ViewBtns>
        <ViewBtn $w={38} $on><NormalViewIcon /></ViewBtn>
        <ViewBtn $w={37}><LayoutViewIcon /></ViewBtn>
        <ViewBtn $w={37}><BreakViewIcon /></ViewBtn>
        <Zoom>
          <ZoomSign>-</ZoomSign>
          <ZoomTrack><ZoomThumb /></ZoomTrack>
          <ZoomSign>+</ZoomSign>
          <ZoomPct>100%</ZoomPct>
        </Zoom>
      </ViewBtns>
    </StatusBar>
  </Page>
);

export default App;
